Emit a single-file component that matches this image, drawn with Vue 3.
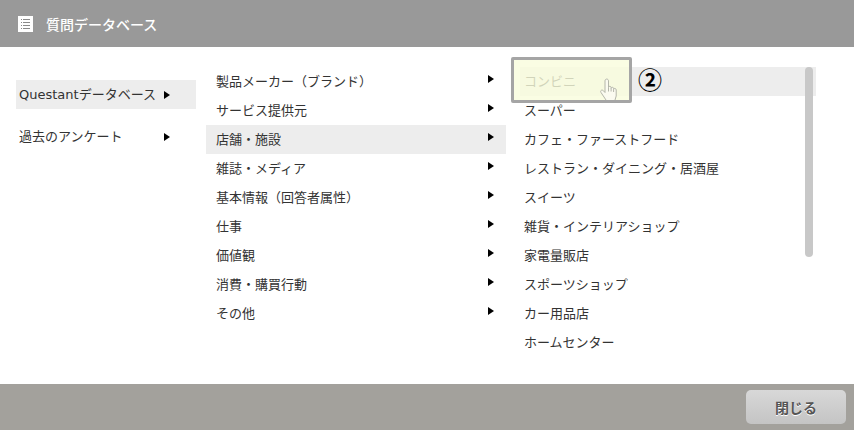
<script setup>
const left = ['Questantデータベース', '過去のアンケート']
const mid = ['製品メーカー（ブランド）', 'サービス提供元', '店舗・施設', '雑誌・メディア', '基本情報（回答者属性）', '仕事', '価値観', '消費・購買行動', 'その他']
const right = ['コンビニ', 'スーパー', 'カフェ・ファーストフード', 'レストラン・ダイニング・居酒屋', 'スイーツ', '雑貨・インテリアショップ', '家電量販店', 'スポーツショップ', 'カー用品店', 'ホームセンター']
</script>

<template>
  <div class="dialog">
    <header class="head">
      <svg class="head-icon" width="15" height="16" viewBox="0 0 15 16">
        <rect width="15" height="16" fill="#fff" />
        <path d="M3 3.500h1M3 6.500h1M3 9.500h1M3 12.500h1M5 3.500h7M5 6.500h7M5 9.500h7M5 12.500h7" stroke="#8a8a8a" fill="none" />
      </svg>
      <span class="head-title">質問データベース</span>
    </header>
    <main class="body">
      <ul class="col col-left">
        <li v-for="(t, i) in left" :key="t" class="row" :class="{ on: i === 0 }">
          <span>{{ t }}</span><i class="tri"></i>
        </li>
      </ul>
      <ul class="col col-mid">
        <li v-for="(t, i) in mid" :key="t" class="row" :class="{ on: i === 2 }">
          <span>{{ t }}</span><i class="tri"></i>
        </li>
      </ul>
      <ul class="col col-right">
        <li v-for="(t, i) in right" :key="t" class="row" :class="{ on: i === 0 }">
          <span>{{ t }}</span>
        </li>
      </ul>
      <div class="scrollbar"></div>
      <div class="callout">
        <svg class="hand" width="18" height="25" viewBox="0 0 18 25">
          <path d="M6 25v-3L1 14.500c-1.200-2 1-3.200 2.500-1.700L5 14.500V3c0-2.600 3.500-2.600 3.500 0v6.500c0-1.600 2.600-1.600 2.600 0v1c0-1.600 2.500-1.600 2.500 0v1c0-1.500 2.600-1.500 2.600.5v6l-1.200 4v3" fill="#fbfbf0" stroke="#b4b6aa" />
          <path d="M8.500 9.500v4M11.100 10.500v3M13.600 11.500v2.500" stroke="#b4b6aa" fill="none" />
        </svg>
      </div>
      <span class="badge">②</span>
    </main>
    <footer class="foot">
      <button class="close" type="button">閉じる</button>
    </footer>
  </div>
</template>

<style scoped>
.dialog {
  width: 854px;
  height: 430px;
  display: flex;
  flex-direction: column;
  font-family: "DejaVu Sans", "Noto Sans CJK JP", sans-serif;
  font-size: 13px;
  color: #333;
  overflow: hidden;
}
.head {
  height: 47px;
  background: #999;
  display: flex;
  align-items: center;
  padding-left: 18px;
  gap: 13px;
  flex: none;
}
.head-icon { flex: none; }
.head-title {
  color: #fff;
  font-size: 14px;
  font-weight: 500;
  font-family: "Noto Sans CJK JP", sans-serif;
}
.body {
  position: relative;
  flex: 1;
  display: flex;
  background: #fff;
}
.col {
  list-style: none;
  margin: 0;
  padding: 0;
}
.row {
  height: 29px;
  display: flex;
  align-items: center;
  padding: 0 0 2px 10px;
  box-sizing: border-box;
  position: relative;
}
.row.on { background: #ededed; }
.tri {
  position: absolute;
  width: 0;
  height: 0;
  border-left: 6px solid #000;
  border-top: 4px solid transparent;
  border-bottom: 4px solid transparent;
}
.col-left {
  width: 180px;
  margin: 33px 0 0 16px;
}
.col-left .row { padding-left: 3px; }
.col-left .row + .row { margin-top: 13px; }
.col-left .tri { left: 148px; top: 11px; }
.col-mid {
  width: 300px;
  margin: 20px 0 0 10px;
}
.col-mid .tri { left: 282px; top: 8px; }
.col-right {
  width: 296px;
  margin: 20px 0 0 14px;
}
.col-right .row { padding-left: 4px; }
.scrollbar {
  position: absolute;
  left: 805px;
  top: 20px;
  width: 8px;
  height: 190px;
  border-radius: 4px;
  background: #c8c8c8;
}
.callout {
  position: absolute;
  left: 511px;
  top: 10px;
  width: 121px;
  height: 46px;
  box-sizing: border-box;
  border: 3px solid #a5a5a5;
  border-radius: 2px;
  background: rgba(249, 253, 220, 0.8);
  overflow: hidden;
}
.hand {
  position: absolute;
  left: 86px;
  top: 18px;
}
.badge {
  position: absolute;
  left: 638px;
  top: 19px;
  font-size: 24px;
  line-height: 26px;
  font-weight: 700;
  color: #000;
  font-family: "Noto Sans CJK JP", sans-serif;
}
.foot {
  height: 46px;
  flex: none;
  background: #a3a19c;
  display: flex;
  align-items: center;
  justify-content: flex-end;
  padding-right: 8px;
}
.close {
  width: 100px;
  height: 34px;
  border: none;
  border-radius: 5px;
  background: linear-gradient(#d8d8d8, #c4c4c4);
  font: 700 14px "Noto Sans CJK JP", sans-serif;
  color: #555;
  text-shadow: 0 1px 0 #fff;
}
</style>
